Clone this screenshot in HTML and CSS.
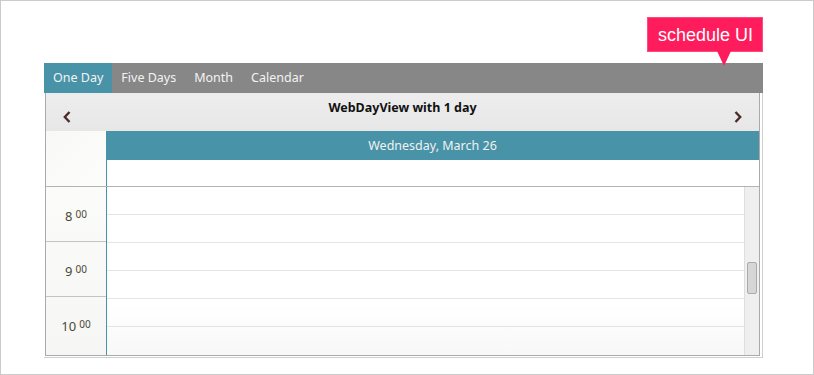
FILE: index.html
```html
<!doctype html>
<html>
<head>
<meta charset="utf-8">
<title>schedule UI</title>
<link rel="stylesheet" href="styles.css">
</head>
<body>
<div class="frame">
  <div class="panel">
    <div class="callout">schedule UI</div>
    <div class="scheduler">
      <ul class="tabs">
        <li class="active">One Day</li>
        <li>Five Days</li>
        <li>Month</li>
        <li>Calendar</li>
      </ul>
      <div class="body">
        <div class="cal">
          <div class="cal-head">
            <span class="nav"><svg width="8" height="12" viewBox="0 0 8 12"><polyline points="6.5,1 1.8,6 6.5,11" fill="none" stroke="#4a2c2c" stroke-width="2.4"/></svg></span>
            <div class="title">WebDayView with 1 day</div>
            <span class="nav"><svg width="8" height="12" viewBox="0 0 8 12"><polyline points="1.5,1 6.2,6 1.5,11" fill="none" stroke="#4a2c2c" stroke-width="2.4"/></svg></span>
          </div>
          <div class="day-row">
            <div class="corner"></div>
            <div class="day-main">
              <div class="day-title">Wednesday, March 26</div>
              <div class="allday"></div>
            </div>
          </div>
          <div class="scroll">
            <div class="times">
              <div class="hour">8<sup>00</sup></div>
              <div class="hour">9<sup>00</sup></div>
              <div class="hour">10<sup>00</sup></div>
            </div>
            <div class="grid">
              <div class="slot"></div><div class="slot"></div>
              <div class="slot"></div><div class="slot"></div>
              <div class="slot"></div><div class="slot"></div>
            </div>
            <div class="scrollbar"><div class="thumb"></div></div>
          </div>
        </div>
      </div>
    </div>
  </div>
</div>
</body>
</html>
```

FILE: styles.css
```css
body{
	margin:0;
	font-family:"Noto Sans","Open Sans",sans-serif;
	background:#fff;
	}
.frame{
	width:814px;
	height:375px;
	box-sizing:border-box;
	border:1px solid #cbcbcb;
	padding:16px 0 0 43px;
	}
.panel{
	width:719px;
	display:flex;
	flex-direction:column;
	}
.callout{
	align-self:flex-end;
	position:relative;
	height:35px;
	box-sizing:border-box;
	padding:1px 9px 0 10px;
	line-height:33px;
	background:#ff1c5c;
	border:1px solid #ff4a7e;
	color:#fff;
	font-family:"Liberation Sans",Arial,sans-serif;
	font-size:18px;
	margin-bottom:11px;
	}
.callout:after{
	content:'';
	position:absolute;
	top:100%;
	right:31px;
	border-left:7px solid transparent;
	border-right:7px solid transparent;
	border-top:15px solid #ff1c5c;
	}
.tabs{
	list-style:none;
	margin:0;
	padding:0;
	height:30px;
	display:flex;
	background:#878787;
	}
.tabs li{
	padding:0 9px;
	line-height:30px;
	font-size:12.5px;
	color:#f3f3f3;
	}
.tabs .active{
	background:#4893a7;
	}
.body{
	padding:0 2px 1px 1px;
	border-right:1px solid #cfcfcf;
	border-bottom:1px solid #cfcfcf;
	}
.cal{
	border:1px solid #aaa;
	border-top:0;
	}
.cal-head{
	height:38px;
	display:flex;
	align-items:flex-start;
	padding:0 17px 0 17px;
	background:linear-gradient(#ededed,#e7e7e7);
	}
.nav{
	padding-top:13px;
	}
.title{
	flex:1;
	text-align:center;
	font-weight:bold;
	font-size:12.5px;
	color:#111;
	padding-top:6px;
	}
.day-row{
	display:flex;
	border-bottom:1px solid #b3b3b3;
	}
.corner{
	width:60px;
	background:linear-gradient(135deg,#f8f8f6,#fdfdfc);
	}
.day-main{
	flex:1;
	}
.day-title{
	height:29px;
	line-height:29px;
	background:#4893a7;
	color:#f1f1f1;
	text-align:center;
	font-size:12.5px;
	}
.allday{
	height:26px;
	border-left:1px solid #4893a7;
	background:#fff;
	}
.scroll{
	height:168px;
	overflow:hidden;
	display:flex;
	}
.times{
	width:60px;
	border-right:1px solid #4893a7;
	background:linear-gradient(#fbfbf9,#f6f6f4);
	}
.hour{
	height:55px;
	border-bottom:1px solid #c3c3c3;
	display:flex;
	align-items:center;
	justify-content:center;
	padding-top:3px;
	box-sizing:border-box;
	font-size:13px;
	color:#4a4a3a;
	}
.hour:last-child{
	border-bottom:0;
	}
.hour sup{
	font-size:10px;
	margin-left:3px;
	position:relative;
	top:-2px;
	}
.grid{
	flex:1;
	background:linear-gradient(#fff 70%,#f8f8f8);
	}
.slot{
	height:27px;
	border-bottom:1px solid #e4e4e4;
	}
.slot:last-child{
	border-bottom:0;
	}
.scrollbar{
	width:14px;
	border-left:1px solid #dedede;
	background:#efefef;
	padding-top:75px;
	}
.thumb{
	width:8px;
	height:30px;
	margin-left:2px;
	background:#d6d6d6;
	border:1px solid #ababab;
	border-radius:2px;
	}
```
